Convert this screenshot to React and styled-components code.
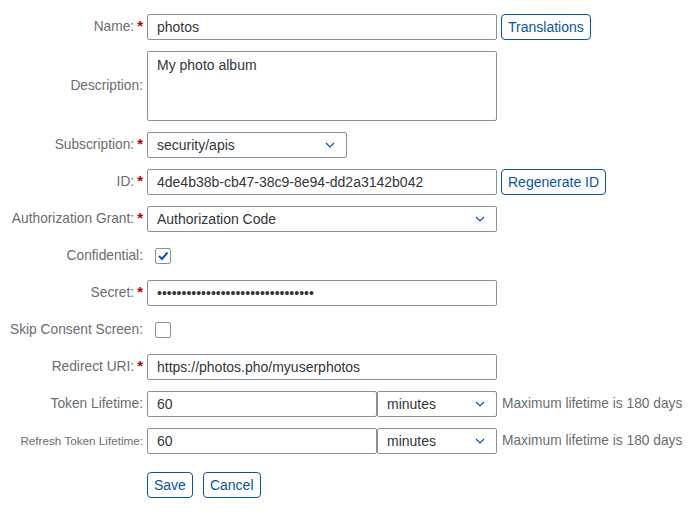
import React from "react";
import styled, { createGlobalStyle } from "styled-components";

const Global = createGlobalStyle`
  html, body { margin: 0; padding: 0; background: #fff; }
  body { font-family: "Liberation Sans", Arial, sans-serif; font-size: 14px; color: #32363a; }
  * { box-sizing: border-box; }
`;

const Form = styled.form`
  display: grid;
  grid-template-columns: 143px 1fr;
  column-gap: 4px;
  row-gap: 11px;
  align-items: center;
  padding-top: 14px;
`;

const Label = styled.label`
  display: flex;
  justify-content: flex-end;
  align-items: center;
  color: #6a6d70;
  font-size: ${(p) => (p.$small ? "11.7px" : "13.75px")};
  white-space: nowrap;
  padding-bottom: 2px;
`;

const Star = styled.span`
  color: #bb0000;
  font-weight: bold;
  font-size: 15px;
  margin-left: 3px;
  line-height: 1;
  position: relative;
  top: -1px;
`;

const Field = styled.div`
  display: flex;
  align-items: center;
  gap: 4px;
  min-height: ${(p) => (p.$tall ? "70px" : "26px")};
`;

const TextInput = styled.input`
  width: ${(p) => p.$w || 350}px;
  height: 26px;
  border: 1px solid #89919a;
  border-radius: 2px;
  padding: 0 9px 1px;
  font: inherit;
  font-size: 14px;
  color: #32363a;
  background: #fff;
  outline: none;
  margin: 0;
`;

const TextArea = styled.textarea`
  width: 350px;
  height: 70px;
  border: 1px solid #89919a;
  border-radius: 2px;
  padding: 5px 9px;
  font: inherit;
  font-size: 14px;
  color: #32363a;
  resize: none;
  outline: none;
  margin: 0;
`;

const SelectBox = styled.div`
  width: ${(p) => p.$w}px;
  height: 26px;
  border: 1px solid #89919a;
  border-radius: 2px;
  padding: 0 11px 1px 9px;
  display: flex;
  align-items: center;
  justify-content: space-between;
  color: #32363a;
  background: #fff;
`;

const Button = styled.button`
  height: 26px;
  padding: 0 6px 1px;
  border: 1px solid #0854a0;
  border-radius: 4px;
  background: #fff;
  color: #0854a0;
  font: inherit;
  font-size: 14px;
  cursor: pointer;
  margin: 0;
`;

const Check = styled.span`
  width: 16px;
  height: 16px;
  border: 1px solid #89919a;
  border-radius: 2px;
  margin-left: 8px;
  display: flex;
  align-items: center;
  justify-content: center;
  background: #fff;
`;

const Pair = styled.div`
  display: flex;
  align-items: center;
`;

const Hint = styled.span`
  color: #6a6d70;
  font-size: 13.75px;
  margin-left: 1px;
  padding-bottom: 2px;
  white-space: nowrap;
`;

const Actions = styled.div`
  grid-column: 2;
  display: flex;
  gap: 10px;
  margin-top: 7px;
`;

const Chevron = () => (
  <svg width="10" height="6" viewBox="0 0 10 6">
    <path d="M1 1 L5 5 L9 1" fill="none" stroke="#0854a0" strokeWidth="1.2" />
  </svg>
);

const Select = ({ w, children }) => (
  <SelectBox $w={w}>
    <span>{children}</span>
    <Chevron />
  </SelectBox>
);

const Checkbox = ({ checked }) => (
  <Check>
    {checked && (
      <svg width="14" height="14" viewBox="0 0 14 14">
        <path d="M3 7 L6 10 L11.5 3.5" fill="none" stroke="#0854a0" strokeWidth="2" />
      </svg>
    )}
  </Check>
);

const Row = ({ label, required, small, tall, children }) => (
  <>
    <Label $small={small}>
      {label}
      {required && <Star>*</Star>}
    </Label>
    <Field $tall={tall}>{children}</Field>
  </>
);

export default function App() {
  return (
    <>
      <Global />
      <Form onSubmit={(e) => e.preventDefault()}>
        <Row label="Name:" required>
          <TextInput defaultValue="photos" />
          <Button type="button">Translations</Button>
        </Row>
        <Row label="Description:" tall>
          <TextArea defaultValue="My photo album" />
        </Row>
        <Row label="Subscription:" required>
          <Select w={200}>security/apis</Select>
        </Row>
        <Row label="ID:" required>
          <TextInput defaultValue="4de4b38b-cb47-38c9-8e94-dd2a3142b042" />
          <Button type="button">Regenerate ID</Button>
        </Row>
        <Row label="Authorization Grant:" required>
          <Select w={350}>Authorization Code</Select>
        </Row>
        <Row label="Confidential:">
          <Checkbox checked />
        </Row>
        <Row label="Secret:" required>
          <TextInput type="password" defaultValue="secretsecretsecretsecretsecretse" />
        </Row>
        <Row label="Skip Consent Screen:">
          <Checkbox />
        </Row>
        <Row label="Redirect URI:" required>
          <TextInput defaultValue="https://photos.pho/myuserphotos" />
        </Row>
        <Row label="Token Lifetime:">
          <Pair>
            <TextInput $w={230} defaultValue="60" />
            <Select w={120}>minutes</Select>
          </Pair>
          <Hint>Maximum lifetime is 180 days</Hint>
        </Row>
        <Row label="Refresh Token Lifetime:" small>
          <Pair>
            <TextInput $w={230} defaultValue="60" />
            <Select w={120}>minutes</Select>
          </Pair>
          <Hint>Maximum lifetime is 180 days</Hint>
        </Row>
        <Actions>
          <Button type="submit">Save</Button>
          <Button type="button">Cancel</Button>
        </Actions>
      </Form>
    </>
  );
}
